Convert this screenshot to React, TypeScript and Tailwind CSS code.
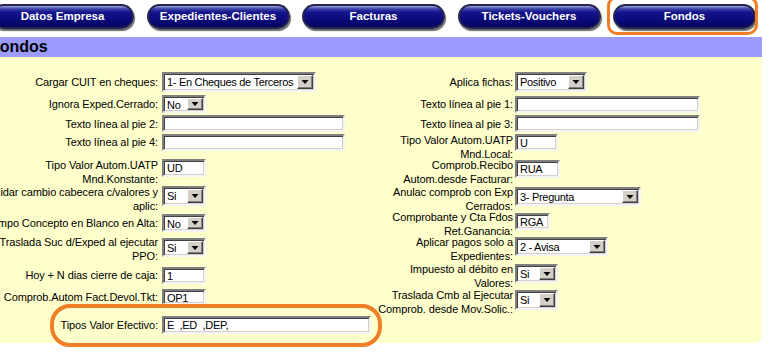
import React from 'react';

const tabs = ['Datos Empresa', 'Expedientes-Clientes', 'Facturas', 'Tickets-Vouchers', 'Fondos'];

const sunken =
  'border-2 border-t-[#808080] border-l-[#808080] border-b-[#f4f4f4] border-r-[#f4f4f4] shadow-[inset_1px_1px_0_#404040,inset_-1px_-1px_0_#d4d0c8] bg-white tracking-[-0.3px]';

const Select: React.FC<{ value: string; className: string }> = ({ value, className }) => (
  <div className={`flex ${sunken} ${className}`}>
    <span className="flex-1 overflow-hidden whitespace-nowrap pl-[3px] pt-[1px] leading-[14px]">{value}</span>
    <span className="my-[1px] mr-[1px] flex w-[16px] shrink-0 items-center justify-center border border-t-white border-l-white border-r-[#404040] border-b-[#404040] bg-[#d4d0c8] shadow-[inset_-1px_-1px_0_#808080]">
      <svg width="8" height="4" viewBox="0 0 8 4">
        <path d="M0.5 0h7L4 4z" fill="#000" />
      </svg>
    </span>
  </div>
);

const Input: React.FC<{ value?: string; className: string }> = ({ value = '', className }) => (
  <div className={`${sunken} ${className} overflow-hidden whitespace-pre pl-[3px] leading-[14px]`}>{value}</div>
);

const Label: React.FC<{ lines: string[]; className?: string }> = ({ lines, className = '' }) => (
  <div className={`whitespace-nowrap text-right leading-[14px] tracking-[-0.1px] ${className}`}>
    {lines.map((l, i) => (
      <div key={i}>{l}</div>
    ))}
  </div>
);

type Row = {
  l: string[];
  la: string;
  lf: React.ReactNode;
  r?: string[];
  ra?: string;
  rf?: React.ReactNode;
};

const rows: Row[] = [
  {
    l: ['Cargar CUIT en cheques:'], la: 'self-center',
    lf: <Select value="1- En Cheques de Terceros" className="h-[20px] w-[154px] self-center" />,
    r: ['Aplica fichas:'], ra: 'self-center',
    rf: <Select value="Positivo" className="h-[20px] w-[72px] self-center" />,
  },
  {
    l: ['Ignora Exped.Cerrado:'], la: 'self-center',
    lf: <Select value="No" className="h-[18px] w-[44px] self-center" />,
    r: ['Texto línea al pie 1:'], ra: 'self-center',
    rf: <Input className="h-[17px] w-[185px] self-center" />,
  },
  {
    l: ['Texto línea al pie 2:'], la: 'self-center',
    lf: <Input className="h-[17px] w-[183px] self-center" />,
    r: ['Texto línea al pie 3:'], ra: 'self-center',
    rf: <Input className="h-[17px] w-[185px] self-center" />,
  },
  {
    l: ['Texto línea al pie 4:'], la: 'self-start mt-[2px]',
    lf: <Input className="mt-[1px] h-[17px] w-[183px] self-start" />,
    r: ['Tipo Valor Autom.UATP', 'Mnd.Local:'], ra: 'self-start',
    rf: <Input value="U" className="mt-[1px] h-[17px] w-[43px] self-start" />,
  },
  {
    l: ['Tipo Valor Autom.UATP', 'Mnd.Konstante:'], la: 'self-start',
    lf: <Input value="UD" className="mt-[1px] h-[18px] w-[44px] self-start" />,
    r: ['Comprob.Recibo', 'Autom.desde Facturar:'], ra: 'self-start',
    rf: <Input value="RUA" className="mt-[2px] h-[18px] w-[45px] self-start" />,
  },
  {
    l: ['Validar cambio cabecera c/valores y', 'aplic:'], la: 'self-start',
    lf: <Select value="Si" className="mt-[1px] h-[20px] w-[44px] self-start" />,
    r: ['Anulac comprob con Exp', 'Cerrados:'], ra: 'self-start',
    rf: <Select value="3- Pregunta" className="mt-[2px] h-[19px] w-[126px] self-start" />,
  },
  {
    l: ['Campo Concepto en Blanco en Alta:'], la: 'self-center',
    lf: <Select value="No" className="h-[18px] w-[44px] self-center" />,
    r: ['Comprobante y Cta Fdos', 'Ret.Ganancia:'], ra: 'self-start',
    rf: <Input value="RGA" className="mt-[3px] h-[17px] w-[35px] self-start" />,
  },
  {
    l: ['Traslada Suc d/Exped al ejecutar', 'PPO:'], la: 'self-start',
    lf: <Select value="Si" className="mt-[3px] h-[19px] w-[44px] self-start" />,
    r: ['Aplicar pagos solo a', 'Expedientes:'], ra: 'self-start',
    rf: <Select value="2 - Avisa" className="mt-[2px] h-[19px] w-[93px] self-start" />,
  },
  {
    l: ['Hoy + N dias cierre de caja:'], la: 'self-center',
    lf: <Input value="1" className="h-[17px] w-[44px] self-center" />,
    r: ['Impuesto al débito en', 'Valores:'], ra: 'self-start',
    rf: <Select value="Si" className="mt-[2px] h-[19px] w-[43px] self-start" />,
  },
  {
    l: ['Comprob.Autom Fact.Devol.Tkt:'], la: 'self-start mt-[2px]',
    lf: <Input value="OP1" className="mt-[1px] h-[16px] w-[44px] self-start" />,
    r: ['Traslada Cmb al Ejecutar', 'Comprob. desde Mov.Solic.:'], ra: 'self-start',
    rf: <Select value="Si" className="mt-[2px] h-[20px] w-[43px] self-start" />,
  },
  {
    l: ['Tipos Valor Efectivo:'], la: 'self-center',
    lf: <Input value="E  ,ED  ,DEP," className="h-[18px] w-[209px] self-center" />,
  },
];

export default function App() {
  return (
    <div className="relative h-[352px] w-[772px] overflow-hidden bg-white font-['Liberation_Sans',Arial,sans-serif] text-[11px] text-black">
      <div className="ml-[-20px] w-[782px]">
        <nav className="flex h-[37px] items-start gap-[12.5px] pl-[11px] pt-[4px]">
          {tabs.map((t) => (
            <div
              key={t}
              className="flex h-[25px] w-[143px] shrink-0 items-center justify-center rounded-full border-2 border-[#25254d] bg-[linear-gradient(to_bottom,#9aa4d8_0%,#3a43a8_14%,#14148c_30%,#0b0b7c_65%,#05055e_100%)] text-[11.5px] font-bold text-white shadow-[1px_2px_1px_#6a6a6a]"
            >
              {t}
            </div>
          ))}
        </nav>
        <div className="h-[20px] bg-[#9c9cff] pl-[10px] text-[16px] font-bold leading-[20px]">Fondos</div>
        <div className="h-[286px] rounded-br-[8px] bg-[#ffffcc] pt-[13px]">
          <div className="grid grid-cols-[182px_211px_142px_1fr] grid-rows-[24px_20px_19px_25px_27px_25px_25px_27px_26px_27px_20px]">
            {rows.map((row, i) => (
              <React.Fragment key={i}>
                <Label lines={row.l} className={`pr-[4px] ${row.la}`} />
                <div className="flex">{row.lf}</div>
                {row.r ? <Label lines={row.r} className={`pr-[2px] ${row.ra}`} /> : <div />}
                <div className="flex">{row.rf}</div>
              </React.Fragment>
            ))}
          </div>
        </div>
      </div>
      {/* hand-drawn highlight marks */}
      <div className="pointer-events-none absolute left-[607px] top-[-4px] h-[39px] w-[151px] rounded-[10px] border-[3px] border-[#f07d28]" />
      <div className="pointer-events-none absolute left-[50px] top-[304px] h-[43px] w-[332px] rounded-[20px] border-[4px] border-[#f07d28]" />
    </div>
  );
}
